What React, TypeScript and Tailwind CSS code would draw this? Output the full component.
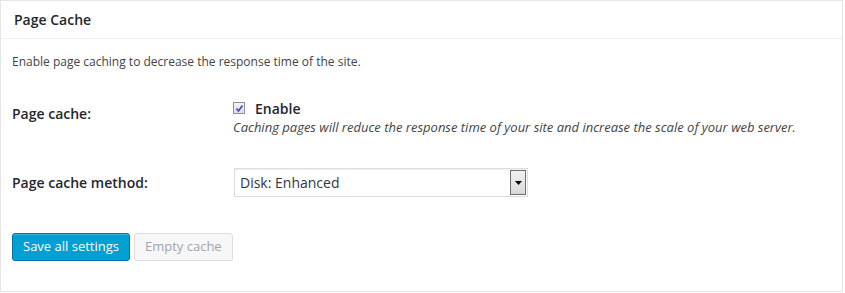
import { memo } from "react";

const font = { fontFamily: '"Open Sans", "Noto Sans", sans-serif' };

function SelectBox() {
    return (
        <div className="flex items-center w-[294px] h-[29px] border border-[#ddd] bg-white pl-[5px] pr-[1px] shadow-[inset_0_1px_2px_rgba(0,0,0,0.07)]">
            <span className="flex-1 text-[14px] text-[#32373c]">Disk: Enhanced</span>
            <div className="flex items-center justify-center w-[16px] h-[25px] border border-[#707070] bg-gradient-to-b from-[#f2f2f2] to-[#d8d8d8]">
                <svg width="7" height="4" viewBox="0 0 7 4">
                    <path d="M0 0h7L3.5 4z" fill="#000" />
                </svg>
            </div>
        </div>
    );
}

function Checkbox() {
    return (
        <span className="flex items-center justify-center w-[12px] h-[12px] border border-[#8f8f9d] bg-gradient-to-b from-[#f4f4f8] to-[#dcdce6]">
            <svg width="9" height="9" viewBox="0 0 9 9">
                <path d="M1.5 4.5 L3.5 7 L7.5 1.5" fill="none" stroke="#3b4bb0" strokeWidth="1.6" />
            </svg>
        </span>
    );
}

function App() {
    return (
        <div className="w-[845px] h-[293px] bg-white" style={font}>
            <div className="w-[843px] h-[292px] border border-[#e5e5e5] bg-white">
                <div className="h-[38px] flex items-center px-[13px] border-b border-[#eee]">
                    <h3 className="text-[14px] font-semibold text-[#23282d]">Page Cache</h3>
                </div>

                <div className="px-[11px] text-[13px] text-[#444]">
                    <p className="mt-[13px] leading-[20px] text-[12px]">
                        Enable page caching to decrease the response time of the site.
                    </p>

                    <div className="flex mt-[20px]">
                        <div className="w-[221px] pt-[11px] font-semibold text-[14px] text-[#23282d]">Page cache:</div>
                        <div className="pt-[6px]">
                            <label className="flex items-center gap-[10px] h-[20px]">
                                <Checkbox />
                                <span className="font-semibold text-[14px] text-[#23282d]">Enable</span>
                            </label>
                            <p className="italic text-[13px] leading-[19px] text-[#444]">
                                Caching pages will reduce the response time of your site and increase the scale of your web server.
                            </p>
                        </div>
                    </div>

                    <div className="flex items-center mt-[31px]">
                        <div className="w-[222px] font-semibold text-[14px] text-[#23282d]">Page cache method:</div>
                        <SelectBox />
                    </div>

                    <div className="flex gap-[4px] mt-[36px]">
                        <button className="h-[28px] px-[10px] rounded-[3px] border border-[#0073aa] bg-[#00a0d2] text-white text-[13px] shadow-[0_1px_0_rgba(120,200,230,0.5)_inset]">
                            Save all settings
                        </button>
                        <button className="h-[28px] px-[10px] rounded-[3px] border border-[#ddd] bg-[#f7f7f7] text-[#a0a5aa] text-[13px]">
                            Empty cache
                        </button>
                    </div>
                </div>
            </div>
        </div>
    );
}

export default memo(App);
